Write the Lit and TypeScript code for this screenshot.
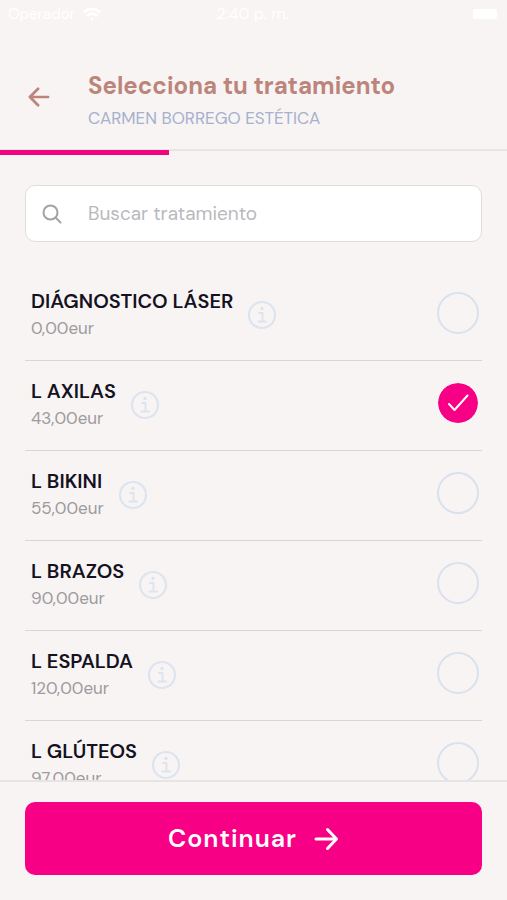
import { LitElement, html, css, svg, nothing } from "lit";
import { customElement, state } from "lit/decorators.js";

interface Treatment {
  id: string;
  name: string;
  price: string;
}

const TREATMENTS: Treatment[] = [
  { id: "diagnostico", name: "DIÁGNOSTICO LÁSER", price: "0,00eur" },
  { id: "axilas", name: "L AXILAS", price: "43,00eur" },
  { id: "bikini", name: "L BIKINI", price: "55,00eur" },
  { id: "brazos", name: "L BRAZOS", price: "90,00eur" },
  { id: "espalda", name: "L ESPALDA", price: "120,00eur" },
  { id: "gluteos", name: "L GLÚTEOS", price: "97,00eur" },
];

const arrowPath = svg`<path d="M2 12H22.500M13.500 2.500L22.500 12L13.500 21.500" />`;

@customElement("app-root")
export class AppRoot extends LitElement {
  @state() private selected = new Set<string>(["axilas"]);
  @state() private query = "";

  static styles = css`
    :host {
      display: flex;
      flex-direction: column;
      height: 100vh;
      overflow: hidden;
      background: #f8f4f3;
      color: #14121f;
      font-family: "DM Sans", Inter, "Liberation Sans", sans-serif;
    }
    * {
      box-sizing: border-box;
    }
    button {
      border: 0;
      padding: 0;
      background: none;
      font: inherit;
      cursor: pointer;
    }
    svg {
      display: block;
      fill: none;
      stroke: currentColor;
      stroke-linecap: round;
      stroke-linejoin: round;
    }
    .status {
      display: grid;
      grid-template-columns: 1fr auto 1fr;
      align-items: center;
      flex: none;
      height: 28px;
      padding: 0 10px 0 8px;
      color: #fff;
      font-size: 16px;
      line-height: 20px;
    }
    .carrier {
      display: flex;
      align-items: center;
      gap: 8px;
      font-size: 15px;
    }
    .battery {
      justify-self: end;
      width: 24px;
      height: 10px;
      border-radius: 2px;
      background: #fff;
    }
    .header {
      display: flex;
      align-items: center;
      flex: none;
      height: 121px;
      padding: 24px 24px 8px;
    }
    .back {
      width: 64px;
      color: #bc857b;
    }
    .back svg {
      margin-left: 4px;
      stroke-width: 3;
    }
    .heading {
      padding-top: 10px;
    }
    .title {
      margin: 0;
      color: #bc857b;
      font-size: 24px;
      font-weight: 700;
      line-height: 32px;
    }
    .place {
      margin: 0;
      color: #a5b1cd;
      font-size: 17px;
      line-height: 32px;
    }
    .progress {
      flex: none;
      height: 6px;
      border-top: 2px solid #e8e4e4;
    }
    .progress-bar {
      height: 5px;
      margin-top: -1px;
      background: #f0047f;
    }
    .content {
      flex: 1;
      min-height: 0;
      overflow-y: auto;
      scrollbar-width: none;
      padding: 30px 25px 0;
    }
    .search {
      display: flex;
      align-items: center;
      height: 57px;
      padding: 0 16px;
      border: 1px solid #dfdcdb;
      border-radius: 10px;
      background: #fff;
      color: #a3a3a6;
    }
    .search svg {
      stroke-width: 2;
    }
    .search-input {
      flex: 1;
      min-width: 0;
      height: 40px;
      margin-left: 26px;
      padding: 0;
      border: 0;
      outline: 0;
      background: none;
      color: #14121f;
      font: inherit;
      font-size: 19px;
    }
    .search-input::placeholder {
      color: #b9b9bd;
      opacity: 1;
    }
    .list {
      margin: 29px 0 0;
      padding: 0;
      list-style: none;
    }
    .row {
      display: flex;
      align-items: center;
      height: 90px;
      padding: 0 3px 0 6px;
      border-bottom: 1px solid #d9d6d6;
    }
    .text {
      padding-bottom: 1px;
      cursor: pointer;
    }
    .name {
      display: block;
      font-size: 20px;
      font-weight: 600;
      line-height: 26px;
    }
    .price {
      display: block;
      color: #9c9b9f;
      font-size: 17px;
      line-height: 28px;
    }
    .info {
      margin-left: 14px;
      padding-bottom: 2px;
      color: #dce4f0;
    }
    .pick {
      display: grid;
      place-items: center;
      margin-left: auto;
      padding-bottom: 6px;
      color: #fff;
    }
    .pick > * {
      grid-area: 1 / 1;
    }
    .pick svg {
      pointer-events: none;
      stroke-width: 2;
    }
    .box {
      appearance: none;
      width: 42px;
      height: 42px;
      margin: 0;
      border: 2px solid #d8e1ed;
      border-radius: 50%;
      cursor: pointer;
    }
    .box:checked {
      border: 1px solid #f8f4f3;
      background: #f80086;
      background-clip: padding-box;
    }
    .footer {
      flex: none;
      padding: 20px 25px 25px;
      border-top: 2px solid #e8e4e4;
    }
    .continue {
      display: flex;
      align-items: center;
      justify-content: center;
      gap: 16px;
      width: 100%;
      height: 73px;
      border-radius: 10px;
      background: #f80086;
      color: #fff;
      font-size: 25px;
      font-weight: 600;
      letter-spacing: 1px;
    }
    .continue svg {
      stroke-width: 3;
    }
  `;

  private toggle(id: string) {
    const next = new Set(this.selected);
    if (!next.delete(id)) next.add(id);
    this.selected = next;
  }

  private renderRow(t: Treatment) {
    const on = this.selected.has(t.id);
    return html`
      <li class="row">
        <label class="text" for=${t.id}>
          <span class="name">${t.name}</span>
          <span class="price">${t.price}</span>
        </label>
        <button class="info" type="button" aria-label="Información">
          <svg width="30" height="30" viewBox="0 0 30 30">
            <circle cx="15" cy="15" r="13" stroke-width="2.200" />
            <path d="M12 13H15.500V21M11.500 21.500H19" stroke-width="2" />
            <circle cx="15" cy="8.500" r="1" stroke-width="1.500" fill="currentColor" />
          </svg>
        </button>
        <div class="pick">
          <input
            class="box"
            type="checkbox"
            id=${t.id}
            .checked=${on}
            @change=${() => this.toggle(t.id)}
          />
          ${on
            ? html`<svg width="24" height="24" viewBox="0 0 24 24">
                <path d="M3 13L8.500 19L21.500 4.500" />
              </svg>`
            : nothing}
        </div>
      </li>
    `;
  }

  render() {
    const q = this.query.toLowerCase();
    const rows = TREATMENTS.filter((t) => t.name.toLowerCase().includes(q));
    return html`
      <div class="status">
        <span class="carrier">
          Operador
          <svg width="18" height="14" viewBox="0 0 18 14" stroke-width="2.500">
            <path d="M1.500 5C6 1 12 1 16.500 5M4.500 8.500C7.500 6 10.500 6 13.500 8.500M9 12V12.100" />
          </svg>
        </span>
        <span>2:40 p. m.</span>
        <span class="battery"></span>
      </div>
      <header class="header">
        <button class="back" type="button" aria-label="Volver">
          <svg width="22" height="20" viewBox="0 0 24 22">
            <path d="M22 11H2M11 2L2 11L11 20" />
          </svg>
        </button>
        <div class="heading">
          <h1 class="title">Selecciona tu tratamiento</h1>
          <p class="place">CARMEN BORREGO ESTÉTICA</p>
        </div>
      </header>
      <div class="progress">
        <div class="progress-bar" style="width: ${(1 / 3) * 100}%"></div>
      </div>
      <main class="content">
        <div class="search">
          <svg width="20" height="20" viewBox="0 0 20 20">
            <circle cx="8.500" cy="8.500" r="7" />
            <path d="M13.500 13.500L18.500 18.500" />
          </svg>
          <input
            class="search-input"
            type="text"
            placeholder="Buscar tratamiento"
            aria-label="Buscar tratamiento"
            .value=${this.query}
            @input=${(e: Event) => (this.query = (e.target as HTMLInputElement).value)}
          />
        </div>
        <ul class="list">
          ${rows.map((t) => this.renderRow(t))}
        </ul>
      </main>
      <footer class="footer">
        <button class="continue" type="button">
          Continuar
          <svg width="26" height="24" viewBox="0 0 24 24">${arrowPath}</svg>
        </button>
      </footer>
    `;
  }
}
